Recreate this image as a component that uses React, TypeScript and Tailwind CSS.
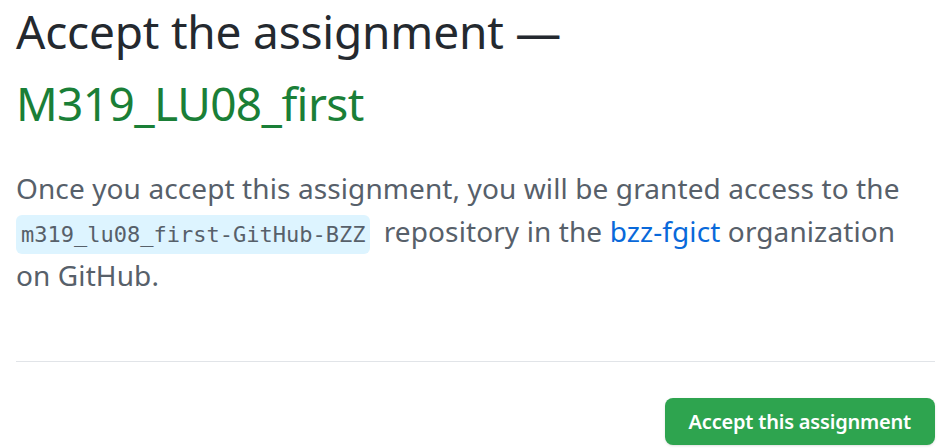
export default function App() {
  return (
    <div
      className="w-[948px] h-[448px] overflow-hidden bg-white pl-4 pr-[13px]"
      style={{ fontFamily: '"Noto Sans", "Open Sans", sans-serif' }}
    >
      <h1 className="text-[46px] leading-[72px] font-normal text-[#24292f] -mt-[5px] tracking-[-0.2px]">
        Accept the assignment —
        <br />
        <span className="text-[#1a7f37] tracking-[-0.6px]">M319_LU08_first</span>
      </h1>

      <p className="mt-[28px] w-[900px] text-[28px] leading-[43px] tracking-[0.1px] text-[#57606a]">
        Once you accept this assignment, you will be granted access to the{" "}
        <code
          className="mr-[6px] inline-block rounded-md bg-[#ddf4ff] px-[5px] py-[6px] align-middle text-[22px] leading-[27px] tracking-normal text-[#57606a]"
          style={{ fontFamily: '"DejaVu Sans Mono", "Liberation Mono", monospace' }}
        >
          m319_lu08_first-GitHub-BZZ
        </code>{" "}
        repository in the{" "}
        <a href="#" className="text-[#0969da]">
          bzz-fgict
        </a>{" "}
        organization on GitHub.
      </p>

      <div className="mt-[64px] border-t border-[#e1e4e8]" />

      <div className="flex justify-end pt-[36px]">
        <button className="h-[47px] rounded-[8px] bg-[#2ea44f] px-[24px] text-[20px] font-semibold tracking-[-0.2px] text-white shadow-sm">
          Accept this assignment
        </button>
      </div>
    </div>
  );
}
